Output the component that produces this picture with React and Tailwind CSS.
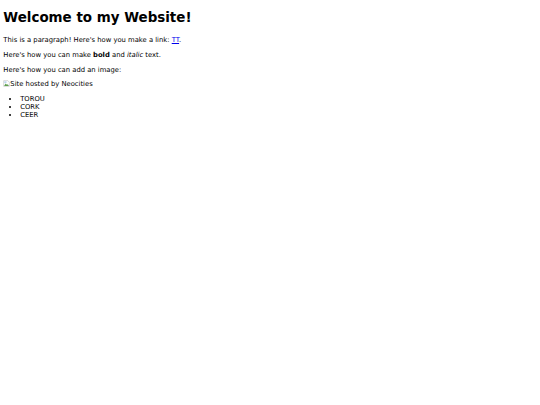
export default function App() {
    return (
        <div className="min-h-[405px] bg-white text-black pt-[10px] px-[3.36px] font-['DejaVu_Sans',sans-serif] text-[6.8px] leading-[8px]">
            <h1 className="text-[13.44px] leading-[15.6px] font-bold mb-[10px]">Welcome to my Website!</h1>
            <p className="mb-[7px]">
                This is a paragraph! Here's how you make a link: <a href="#" className="text-[#0000ee] underline">TT</a>.
            </p>
            <p className="mb-[7px]">
                Here's how you can make <strong>bold</strong> and <em>italic</em> text.
            </p>
            <p className="mb-[6px]">Here's how you can add an image:</p>
            <p className="mb-[7px] flex items-center">
                <svg width="7" height="7" viewBox="0 0 16 16" className="shrink-0">
                    <path d="M1.5 1.5 H11 L14.5 5 V14.5 H1.5 Z" fill="#fff" stroke="#a8a8a8" />
                    <path d="M2.5 13.5 L6 8 L9 11 L11 9.5 L13.5 13.5 Z" fill="#5f9f4f" />
                    <rect x="3" y="3" width="5" height="4" fill="#b9d3f0" />
                </svg>
                Site hosted by Neocities
            </p>
            <ul className="list-disc pl-[16.8px]">
                <li>TOROU</li>
                <li>CORK</li>
                <li>CEER</li>
            </ul>
        </div>
    );
}
